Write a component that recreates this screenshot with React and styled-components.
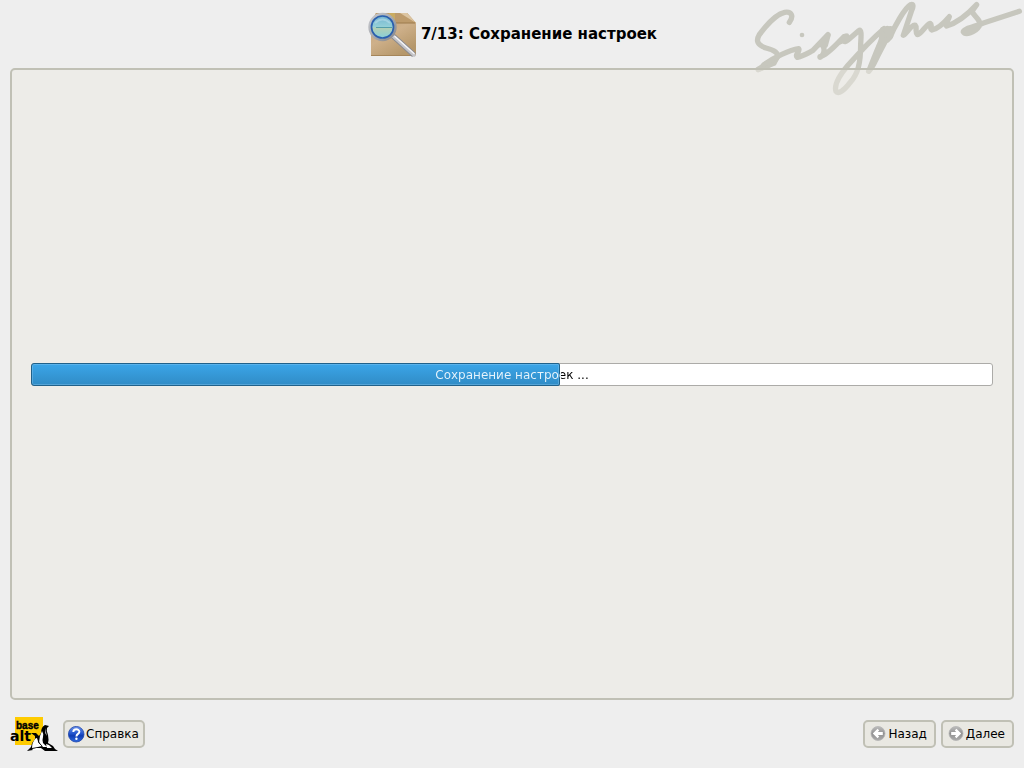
import React from "react";
import styled, { createGlobalStyle } from "styled-components";

const GlobalStyle = createGlobalStyle`
  *, *::before, *::after { box-sizing: border-box; }
  body {
    margin: 0;
    background: #eeeeee;
    color: #000;
    font-family: "DejaVu Sans", "Liberation Sans", sans-serif;
    font-size: 12px;
  }
`;

const Page = styled.div`
  position: relative;
  min-height: 100vh;
  display: flex;
  flex-direction: column;
  padding: 0 10px;
`;

const Signature = styled.svg`
  position: absolute;
  top: 0;
  right: 0;
  width: 280px;
  height: 100px;
  fill: none;
  stroke: #c7c7be;
  stroke-width: 16;
  stroke-linecap: round;
  stroke-linejoin: round;
`;

const Header = styled.header`
  position: relative;
  height: 68px;
  display: flex;
  align-items: center;
  justify-content: center;
  gap: 4px;
`;

const StepIcon = styled.svg`
  width: 50px;
  height: 48px;
`;

const Title = styled.h1`
  margin: 0;
  font-size: 15px;
  line-height: 20px;
  font-weight: bold;
`;

const Panel = styled.main`
  position: relative;
  flex: 1;
  display: flex;
  flex-direction: column;
  justify-content: center;
  padding: 0 19px 20px;
  background: rgba(235, 233, 226, 0.5);
  background-clip: padding-box;
  border: 2px solid #c0c0b5;
  border-radius: 5px;
`;

const Track = styled.div`
  position: relative;
  height: 23px;
  background: #fff;
  border: 1px solid #acaba8;
  border-radius: 3px;
`;

const Fill = styled.div`
  position: absolute;
  top: -1px;
  bottom: -1px;
  left: -1px;
  background: linear-gradient(#3ba5e8, #308cc6);
  border: 1px solid #20618a;
  border-radius: 3px 2px 2px 3px;
  box-shadow: inset 0 0 0 1px rgba(140, 200, 240, 0.4);
`;

const Caption = styled.span`
  position: relative;
  display: block;
  line-height: 22px;
  text-align: center;
  color: transparent;
  background-clip: text;
  -webkit-background-clip: text;
`;

const Footer = styled.footer`
  height: 68px;
  display: flex;
  align-items: center;
  gap: 5px;
`;

const BaseAlt = styled.svg`
  width: 48px;
  height: 36px;
`;

const Spacer = styled.div`
  flex: 1;
`;

const Button = styled.button`
  display: flex;
  align-items: center;
  gap: ${(p) => (p.$compact ? "1px" : "2px")};
  height: 28px;
  padding: ${(p) => (p.$compact ? "0 4px 0 3px" : "0 7px 0 5px")};
  font: inherit;
  color: #000;
  background: #e9e8e2;
  border: 2px solid #c0c0b5;
  border-radius: 5px;
`;

const ButtonIcon = styled.svg`
  width: ${(p) => p.$size || 16}px;
  height: ${(p) => p.$size || 16}px;
`;

function ArrowIcon({ id, flip }) {
  return (
    <ButtonIcon viewBox="0 0 16 16" aria-hidden="true">
      <defs>
        <linearGradient id={id} x1="0" y1="0" x2="0" y2="1">
          <stop offset="0" stopColor="#bdbdbd" />
          <stop offset="0.5" stopColor="#929292" />
          <stop offset="1" stopColor="#aaaaaa" />
        </linearGradient>
      </defs>
      <circle cx="8" cy="7.5" r="7" fill={`url(#${id})`} stroke="#b4b4b4" strokeWidth="0.8" />
      <path
        d="M2.8 7.5 L7.6 2.8 L9.2 4.4 L7.8 6 H12.8 V9 H7.8 L9.2 10.6 L7.6 12.2 Z"
        fill="#fff"
        transform={flip ? "matrix(-1 0 0 1 16 0)" : undefined}
      />
    </ButtonIcon>
  );
}

function HelpIcon() {
  return (
    <ButtonIcon $size={17} viewBox="0 0 17 17" aria-hidden="true">
      <defs>
        <linearGradient id="help" x1="0" y1="0" x2="0" y2="1">
          <stop offset="0" stopColor="#6c93ea" />
          <stop offset="0.45" stopColor="#2456cf" />
          <stop offset="0.6" stopColor="#0f3cb4" />
          <stop offset="1" stopColor="#2f6be0" />
        </linearGradient>
      </defs>
      <circle cx="8.2" cy="8.2" r="7.8" fill="url(#help)" stroke="#1f45a8" strokeWidth="0.8" />
      <path
        d="M5.3 6 C5.3 2.4 11.4 2.5 11.4 5.8 C11.4 8 8.4 7.8 8.4 10.4"
        fill="none"
        stroke="#fff"
        strokeWidth="1.9"
      />
      <circle cx="8.4" cy="12.8" r="1.2" fill="#fff" />
    </ButtonIcon>
  );
}

function PackageIcon() {
  return (
    <StepIcon viewBox="0 0 50 48" aria-hidden="true">
      <defs>
        <linearGradient id="box" x1="0" y1="0" x2="0.6" y2="1">
          <stop offset="0" stopColor="#c4a376" />
          <stop offset="0.55" stopColor="#ceb08a" />
          <stop offset="1" stopColor="#b5976a" />
        </linearGradient>
        <linearGradient id="lens" x1="0" y1="0" x2="0" y2="1">
          <stop offset="0" stopColor="#6fb0cf" />
          <stop offset="0.48" stopColor="#93cfd8" />
          <stop offset="0.54" stopColor="#b3cfb4" />
          <stop offset="1" stopColor="#7fcfe0" />
        </linearGradient>
        <linearGradient id="rim" x1="0" y1="0" x2="1" y2="1">
          <stop offset="0" stopColor="#c9cbd0" />
          <stop offset="1" stopColor="#85878c" />
        </linearGradient>
      </defs>
      <g transform="translate(0 2)">
        <path d="M4 11 L9 1 H40 L49 11 V43 L48 44 H4 Z" fill="url(#box)" />
        <path d="M9 1 H40 L49 11 H4 Z" fill="#bd9b6c" />
        <path d="M22 1 H28 V11 H22 Z" fill="#cdb05f" opacity="0.8" />
        <path d="M33 1 H40 L49 11 Z" fill="#dcc5a2" />
        <path d="M27 11 H48" stroke="#9c7a4c" />
        <path d="M4 43.5 H48" stroke="#a58559" />
        <path d="M26 24 L47 43" stroke="#8b8b8f" strokeWidth="5.6" strokeLinecap="butt" />
        <path d="M26 24 L47 43" stroke="#c4c4c8" strokeWidth="3.6" strokeLinecap="round" />
        <path d="M28 24.5 L47 41.5" stroke="#f4f4f6" strokeWidth="1.5" strokeLinecap="round" />
        <circle cx="15.5" cy="15" r="12.8" fill="url(#lens)" stroke="url(#rim)" strokeWidth="2.8" />
        <circle cx="15.5" cy="15" r="11" fill="none" stroke="#2a5fae" strokeWidth="1.7" />
        <path d="M8 11 Q15.5 4 23 11" fill="none" stroke="#b8dcea" strokeWidth="2" opacity="0.6" />
        <path d="M9 15.5 H25" stroke="#4b97a6" strokeWidth="0.9" />
      </g>
    </StepIcon>
  );
}

function BaseAltLogo() {
  return (
    <BaseAlt viewBox="0 0 48 36" role="img" aria-label="base alt">
      <path d="M5 1 H33 V29 H5 Z" fill="#fecb00" />
      <g fontWeight="bold" fill="#000">
        <text x="6" y="13" fontSize="10" fontFamily="Liberation Sans, sans-serif" stroke="#000" strokeWidth="0.4">
          base
        </text>
        <text x="0" y="25" fontSize="14" fontFamily="DejaVu Sans, sans-serif">
          alt
        </text>
      </g>
      <path
        d="M31 17 Q31 11 35 9 L39 10 L37 12 Q36 15 38 19 Q39 24 38 27 L43 30 L45 33 L48 35 H35 L31 32 L27 32 L23 34 L17 35 L21 31 Q22 26 25 23 L25 20 L21 17 L26 17 L29 20 Z"
        fill="#000"
      />
      <path
        d="M32 15 Q34 18 33 21 Q32 24 33 27 L37 31 L33 31 L29 26 L30 20 Z M26 22 Q28 22 28 26 L32 30 L28 31 L22 32 Q22 26 26 22 Z M36 28 L39 29 L42 32 L37 32 Z"
        fill="#fff"
      />
      <path d="M36 12 L36 16 L37 20 L35 17 Z" fill="#b5b5b5" />
      <path d="M22 33 L27 32 L33 34 H23 Z" fill="#fff" />
      <path d="M28 23 L29 27 L32 30" fill="none" stroke="#000" strokeWidth="0.8" />
    </BaseAlt>
  );
}

function SisyphusSignature() {
  return (
    <Signature viewBox="0 0 840 300" role="img" aria-label="Sisyphus">
      <path d="M136 67 C150 48 143 34 122 37 C96 42 62 82 46 104 C34 124 42 136 66 144 C90 150 106 160 100 172 C88 194 64 200 42 208" />
      <path d="M100 176 L92 192 L42 212 L44 204 L66 188 Z" fill="#c7c7be" strokeWidth="10" />
      <path d="M60 194 C90 172 138 150 164 146 C170 154 150 164 160 172 C178 168 194 158 206 152 L252 104 C242 126 236 132 240 148 C242 164 226 176 228 170 C250 166 280 130 300 110 L308 108 C296 124 300 130 312 120 L344 92 C354 86 351 112 350 132 C350 190 342 222 318 248 C300 272 282 284 276 274 C268 252 290 222 312 196 C340 164 380 120 420 86" />
      <path d="M228 134 L252 106 L244 136 Z M286 126 L304 110 L310 116 Z" fill="#c7c7be" />
      <circle cx="174" cy="105" r="7" fill="#c7c7be" stroke="none" />
      <path d="M430 86 C418 100 396 158 374 214 C386 204 392 186 402 166 L424 124 L438 112 C450 82 482 24 500 14 C510 10 508 22 502 34 L478 106 C488 100 504 72 514 76 C520 82 512 96 520 104 C532 102 544 76 558 70 C568 76 554 86 564 90 C588 84 604 64 616 50 C614 62 600 72 608 78 C642 68 676 38 698 14 L684 34 C688 48 714 60 706 78 C694 98 664 106 658 96 C656 86 700 78 716 70 L826 34" />
      <path d="M416 88 L440 86 L440 108 L430 120 L412 120 Z" fill="#c7c7be" />
    </Signature>
  );
}

function ProgressBar({ value, label }) {
  const edge = `${value}%`;
  return (
    <Track role="progressbar" aria-valuenow={value} aria-valuemin={0} aria-valuemax={100} aria-label={label}>
      <Fill style={{ width: edge }} />
      <Caption style={{ backgroundImage: `linear-gradient(to right, #e8f4fc ${edge}, #000 ${edge})` }}>
        {label}
      </Caption>
    </Track>
  );
}

export default function App() {
  return (
    <>
      <GlobalStyle />
      <Page>
        <SisyphusSignature />
        <Header>
          <PackageIcon />
          <Title>7/13: Сохранение настроек</Title>
        </Header>
        <Panel>
          <ProgressBar value={55.1} label="Сохранение настроек ..." />
        </Panel>
        <Footer>
          <BaseAltLogo />
          <Button type="button" $compact>
            <HelpIcon />
            Справка
          </Button>
          <Spacer />
          <Button type="button">
            <ArrowIcon id="back" />
            Назад
          </Button>
          <Button type="button">
            <ArrowIcon id="next" flip />
            Далее
          </Button>
        </Footer>
      </Page>
    </>
  );
}
